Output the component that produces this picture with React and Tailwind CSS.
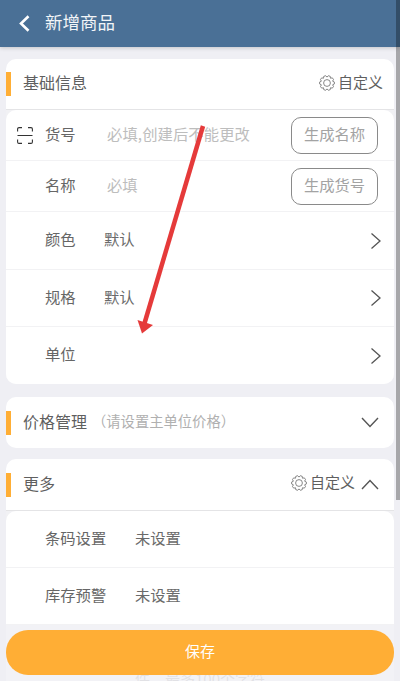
import React from "react";

const font = "font-['Noto_Sans_CJK_SC','Noto_Sans',sans-serif]";

function Accent() {
  return <div className="w-[5px] h-6 bg-[#ffae35] shrink-0" />;
}

function gearPath() {
  const teeth = 10;
  const pts = [];
  const cx = 8, cy = 8;
  for (let i = 0; i < teeth; i++) {
    const a = (i / teeth) * Math.PI * 2;
    const s = (Math.PI * 2) / teeth;
    [[-0.5, 5.9], [-0.22, 7.4], [0.22, 7.4], [0.5, 5.9]].forEach(([o, r]) => {
      const t = a + o * s;
      pts.push(`${(cx + r * Math.cos(t)).toFixed(2)} ${(cy + r * Math.sin(t)).toFixed(2)}`);
    });
  }
  return "M" + pts.join("L") + "Z";
}

function Gear() {
  return (
    <svg width="16" height="16" viewBox="0 0 16 16" fill="none" stroke="#6a6a6a" strokeWidth="0.8" className="shrink-0 mb-[3px]">
      <path d={gearPath()} strokeLinejoin="round" />
      <circle cx="8" cy="8" r="3.4" />
    </svg>
  );
}

function Custom() {
  return (
    <div className="flex items-center gap-[3px] text-[15px] text-[#5f5f5f]">
      <Gear />
      <span className="pb-[4px]">自定义</span>
    </div>
  );
}

function GenButton({ children }) {
  return (
    <div className="w-[87px] h-[37px] mr-[16px] shrink-0 flex items-center justify-center rounded-[10px] border border-[#8a8a8a] pb-[4px] text-[15.3px] text-[#a3a3a3]">
      {children}
    </div>
  );
}

function Row({ label, value, h, border = true, icon, children, gap, valueClass = "text-[#6a6a6a]" }) {
  return (
    <div className={`flex items-center ${h} ${border ? "border-b border-[#f2f2f4]" : ""}`}>
      <div className="w-[39px] pl-[11px] flex items-center shrink-0">{icon}</div>
      <div className={`${gap} shrink-0 pb-[4px] text-[15.3px] text-[#666]`}>{label}</div>
      <div className={`flex-1 pb-[4px] text-[15.3px] ${valueClass}`}>{value}</div>
      {children}
    </div>
  );
}

function Scan() {
  return (
    <svg width="16" height="17" viewBox="0 0 16 17" fill="none" stroke="#333" strokeWidth="1.1">
      <path d="M.6 4.500V2A1.4 1.4 0 0 1 2 .6h3M11 .6h3A1.4 1.4 0 0 1 15.4 2v2.500M.6 12.500V15A1.4 1.4 0 0 0 2 16.4h3M11 16.4h3a1.4 1.4 0 0 0 1.4-1.4v-2.500M.5 8.500h15" />
    </svg>
  );
}

function Arrow() {
  return (
    <svg width="12" height="18" viewBox="0 0 12 18" fill="none" stroke="#555" strokeWidth="1.3" className="mr-[12px] shrink-0">
      <path d="M1.500 1.500 10 9l-8.500 7.500" />
    </svg>
  );
}

function Down() {
  return (
    <svg width="18" height="11" viewBox="0 0 18 11" fill="none" stroke="#555" strokeWidth="1.4" className="shrink-0">
      <path d="M1 1l8 8.500L17 1" />
    </svg>
  );
}

function Up() {
  return (
    <svg width="18" height="11" viewBox="0 0 18 11" fill="none" stroke="#555" strokeWidth="1.4" className="shrink-0">
      <path d="M1 10l8-8.500L17 10" />
    </svg>
  );
}

export default function App() {
  return (
    <div className={`relative w-[400px] h-[681px] overflow-hidden bg-[#efeff4] ${font}`}>
      <header className="h-[47px] bg-[#4a7096] shadow-[0_1px_4px_rgba(0,0,0,0.18)] flex items-center pl-[19px] text-white">
        <svg width="11" height="17" viewBox="0 0 11 17" fill="none" stroke="#fff" strokeWidth="2.6" className="shrink-0">
          <path d="M9.500 1.200 2 8.500l7.500 7.300" />
        </svg>
        <span className="ml-[15px] pb-[3px] text-[17.5px] text-[#f2f5f8]">新增商品</span>
      </header>

      <main className="px-[6px] pt-3 flex flex-col">
        <section className="bg-white rounded-[10px] overflow-hidden">
          <div className="h-[51px] flex items-center justify-between pr-[11px] border-b border-[#e4e4e6]">
            <div className="flex items-center">
              <Accent />
              <span className="ml-3 pb-[4px] text-base text-[#5f5f5f]">基础信息</span>
            </div>
            <Custom />
          </div>
          <div className="bg-[#f1f1f4]">
            <div className="bg-white rounded-t-[10px]">
              <Row label="货号" value="必填,创建后不能更改" h="h-[51px]" gap="w-[62px]" valueClass="text-[#bdbdbd] tracking-[0.1px]" icon={<Scan />}>
                <GenButton>生成名称</GenButton>
              </Row>
              <Row label="名称" value="必填" h="h-[51px]" gap="w-[62px]" valueClass="text-[#bdbdbd]">
                <GenButton>生成货号</GenButton>
              </Row>
              <Row label="颜色" value="默认" h="h-[58px]" gap="w-[59px]"><Arrow /></Row>
              <Row label="规格" value="默认" h="h-[57px]" gap="w-[59px]"><Arrow /></Row>
              <Row label="单位" value="" h="h-[57px]" gap="w-[59px]" border={false}><Arrow /></Row>
            </div>
          </div>
        </section>

        <section className="mt-[13px] bg-white rounded-[10px] h-[51px] flex items-center justify-between pr-[15px]">
          <div className="flex items-center">
            <Accent />
            <span className="ml-3 pb-[4px] text-base text-[#5f5f5f]">价格管理</span>
            <span className="ml-[5px] pb-[3px] text-[14.3px] text-[#b0b0b0]">（请设置主单位价格）</span>
          </div>
          <Down />
        </section>

        <section className="mt-[11px] bg-white rounded-t-[10px] overflow-hidden">
          <div className="h-[52px] flex items-center justify-between pr-[15px] border-b border-[#e4e4e6]">
            <div className="flex items-center">
              <Accent />
              <span className="ml-3 pb-[4px] text-base text-[#5f5f5f]">更多</span>
            </div>
            <div className="flex items-center gap-[6px]">
              <Custom />
              <Up />
            </div>
          </div>
          <div className="bg-[#f1f1f4]">
            <div className="bg-white rounded-t-[10px]">
              <Row label="条码设置" value="未设置" h="h-[57px]" gap="w-[90px]" />
              <Row label="库存预警" value="未设置" h="h-[57px]" gap="w-[90px]" />
              <div className="h-[65px] flex justify-center items-end text-[15px] text-[#aaa]">件，最多100个字符</div>
            </div>
          </div>
        </section>
      </main>

      <svg width="400" height="681" viewBox="0 0 400 681" className="absolute inset-0 pointer-events-none">
        <path d="M203 126 144 325" stroke="#e53a3a" strokeWidth="4.5" fill="none" />
        <path d="M137.500 320 153 325 142 333.500Z" fill="#e53a3a" />
      </svg>

      <footer className="absolute left-0 right-0 bottom-0 h-[56px] bg-[#efeff4]/80 px-[6px] pt-[5px]">
        <button className="w-full h-[45px] rounded-[22px] bg-[#ffae35] text-white text-[15px] pb-[3px]">保存</button>
      </footer>

      <div className="absolute top-0 right-0 w-1 h-[500px] bg-black/30" />
    </div>
  );
}
